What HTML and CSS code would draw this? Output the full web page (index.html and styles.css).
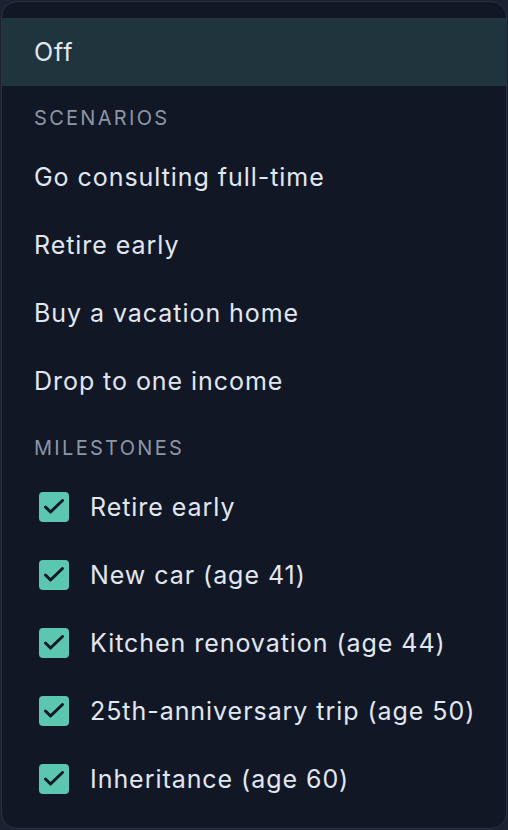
FILE: index.html
```html
<!DOCTYPE html>
<html>
<head>
<meta charset="utf-8">
<link rel="stylesheet" href="styles.css">
</head>
<body>
<div class="frame">
  <div class="panel">
    <div class="item selected">Off</div>
    <div class="header">SCENARIOS</div>
    <div class="item">Go consulting full-time</div>
    <div class="item">Retire early</div>
    <div class="item">Buy a vacation home</div>
    <div class="item">Drop to one income</div>
    <div class="header header-second">MILESTONES</div>
    <div class="check-item"><span class="box"><svg viewBox="0 0 30 30" width="30" height="30"><polyline points="6.5,15 11.5,20 23.5,8.5" fill="none" stroke="#111725" stroke-width="3" stroke-linecap="round" stroke-linejoin="round"/></svg></span><span>Retire early</span></div>
    <div class="check-item"><span class="box"><svg viewBox="0 0 30 30" width="30" height="30"><polyline points="6.5,15 11.5,20 23.5,8.5" fill="none" stroke="#111725" stroke-width="3" stroke-linecap="round" stroke-linejoin="round"/></svg></span><span>New car (age 41)</span></div>
    <div class="check-item"><span class="box"><svg viewBox="0 0 30 30" width="30" height="30"><polyline points="6.5,15 11.5,20 23.5,8.5" fill="none" stroke="#111725" stroke-width="3" stroke-linecap="round" stroke-linejoin="round"/></svg></span><span>Kitchen renovation (age 44)</span></div>
    <div class="check-item"><span class="box"><svg viewBox="0 0 30 30" width="30" height="30"><polyline points="6.5,15 11.5,20 23.5,8.5" fill="none" stroke="#111725" stroke-width="3" stroke-linecap="round" stroke-linejoin="round"/></svg></span><span>25th-anniversary trip (age 50)</span></div>
    <div class="check-item"><span class="box"><svg viewBox="0 0 30 30" width="30" height="30"><polyline points="6.5,15 11.5,20 23.5,8.5" fill="none" stroke="#111725" stroke-width="3" stroke-linecap="round" stroke-linejoin="round"/></svg></span><span>Inheritance (age 60)</span></div>
  </div>
</div>
</body>
</html>
```
FILE: styles.css
```css
html, body {
  margin: 0;
  padding: 0;
  background: #1b2130;
  height: 100%;
}
body {
  font-family: Inter, "Noto Sans", sans-serif;
  color: #e1e7f0;
}
.frame {
  box-sizing: border-box;
  height: 830px;
  padding: 1px 1px 1px 1px;
}
.panel {
  box-sizing: border-box;
  height: 100%;
  background: #111725;
  border: 1px solid #2a3142;
  border-radius: 16px;
  padding-top: 16px;
  overflow: hidden;
  display: flex;
  flex-direction: column;
}
.item {
  height: 68px;
  display: flex;
  align-items: center;
  padding-left: 32px;
  font-size: 25px;
  letter-spacing: 0.95px;
}
.item.selected {
  background: #1f343c;
}
.header {
  box-sizing: border-box;
  height: 57px;
  padding-top: 20px;
  line-height: 24px;
  padding-left: 32px;
  font-size: 20px;
  letter-spacing: 2.3px;
  color: #8d96a6;
}
.header-second {
  height: 58px;
  padding-top: 21px;
}
.check-item {
  height: 68px;
  display: flex;
  align-items: center;
  padding-left: 37px;
  gap: 21px;
  font-size: 25px;
  letter-spacing: 0.95px;
}
.box {
  width: 30px;
  height: 30px;
  border-radius: 4px;
  background: #5cc7b0;
  display: flex;
  flex: none;
}
```
